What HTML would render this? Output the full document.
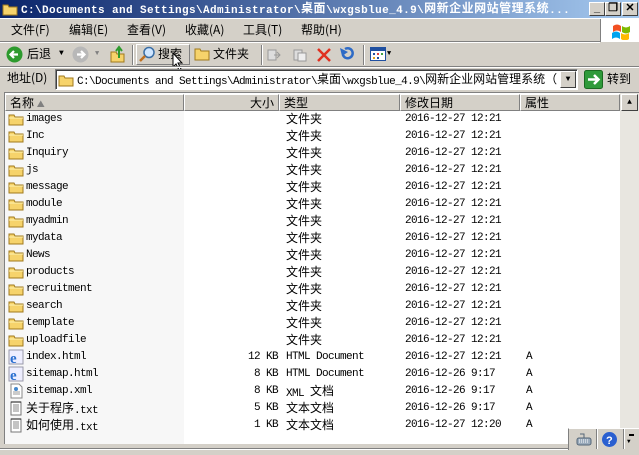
<!DOCTYPE html>
<html><head><meta charset="utf-8"><style>
*{margin:0;padding:0;box-sizing:border-box}
body{width:639px;height:455px;overflow:hidden;background:#d4d0c8;font-family:"Liberation Mono","Noto Sans CJK SC",monospace;font-size:11px;color:#000;position:relative}
.a{position:absolute}
.t{position:absolute;white-space:nowrap}
.cj{font-family:"Noto Sans CJK SC","WenQuanYi Zen Hei",sans-serif;font-size:12px;letter-spacing:0}
.c{font-family:"Noto Sans CJK SC","WenQuanYi Zen Hei",sans-serif;font-size:12px;letter-spacing:0;position:relative;top:-1px}
.row .c{top:-1px}
.btn{position:absolute;width:16px;height:14px;background:#d4d0c8;border:1px solid;border-color:#fff #404040 #404040 #fff;top:2px;font:bold 11px "Liberation Sans",sans-serif;text-align:center;line-height:11px}
.row{position:absolute;left:5px;height:17px;width:615px;line-height:17px;white-space:nowrap;letter-spacing:-0.6px}
.row>span{position:absolute;top:1px;height:16px;line-height:17px}
.hd{position:absolute;top:94px;height:17px;background:#d4d0c8;border:1px solid;border-color:#fff #808080 #808080 #fff;line-height:15px;padding-left:4px}
.m{position:absolute;top:20px;line-height:20px}
</style></head><body>
<div class="a" style="left:0;top:0;width:639px;height:18px;background:linear-gradient(90deg,#0a246a,#a6caf0)"></div>
<svg class="a" style="left:2px;top:2px" width="16" height="14"><path d="M1 3h5l1 2h8v8H1z" fill="#f6d36b" stroke="#a07a1c"/></svg>
<div class="t" style="left:21px;top:0;width:565px;overflow:hidden;line-height:18px;height:18px;color:#fff;font-weight:bold;font-size:11px;letter-spacing:0.4px">C:\Documents and Settings\Administrator\<span class="c" style="font-weight:bold;letter-spacing:0.5px">桌面</span>\wxgsblue_4.9\<span class="c" style="font-weight:bold;letter-spacing:0.5px">网新企业网站管理系统</span>...</div>
<div class="btn" style="left:589px">_</div><div class="btn" style="left:605px">❐</div><div class="btn" style="left:622px">✕</div>
<div class="a" style="left:0;top:18px;width:639px;height:1px;background:#fff"></div>
<div class="m cj" style="left:11px">文件(F)</div>
<div class="m cj" style="left:69px">编辑(E)</div>
<div class="m cj" style="left:127px">查看(V)</div>
<div class="m cj" style="left:185px">收藏(A)</div>
<div class="m cj" style="left:243px">工具(T)</div>
<div class="m cj" style="left:301px">帮助(H)</div>
<div class="a" style="left:600px;top:19px;width:39px;height:23px;background:#fff;border-left:1px solid #808080"></div>
<svg class="a" style="left:611px;top:22px" width="20" height="18"><path d="M2 4q4-3 8 0v6q-4-3-8 0z" fill="#f25022"/><path d="M11 4q4 3 8 0v6q-4 3-8 0z" fill="#7fba00"/><path d="M1 11q4-3 8 0v6q-4-3-8 0z" fill="#00a4ef"/><path d="M10 11q4 3 8 0v6q-4 3-8 0z" fill="#ffb900"/></svg>
<div class="a" style="left:0;top:41px;width:600px;height:1px;background:#808080"></div>
<div class="a" style="left:0;top:42px;width:600px;height:1px;background:#fff"></div>
<svg class="a" style="left:6px;top:46px" width="17" height="17"><circle cx="8.5" cy="8.5" r="8" fill="#2d9a2d"/><path d="M12 8.5H5M8 5l-3.5 3.5L8 12" stroke="#fff" stroke-width="2.2" fill="none"/></svg>
<div class="t cj" style="left:27px;top:45px;line-height:18px">后退</div>
<div class="t" style="left:59px;top:45px;font-size:8px;line-height:18px">▼</div>
<svg class="a" style="left:72px;top:46px" width="17" height="17"><circle cx="8.5" cy="8.5" r="8" fill="#b8b8b8"/><path d="M5 8.5h7M9 5l3.5 3.5L9 12" stroke="#fff" stroke-width="2.2" fill="none"/></svg>
<div class="t" style="left:95px;top:45px;font-size:7px;line-height:18px;color:#808080">▼</div>
<svg class="a" style="left:110px;top:45px" width="16" height="18"><path d="M1 7h5l1 2h7v8H1z" fill="#f6d36b" stroke="#a07a1c"/><path d="M9 13V4M6 6l3-4 3 4" stroke="#2d9a2d" stroke-width="2" fill="none"/></svg>
<div class="a" style="left:132px;top:45px;width:1px;height:20px;background:#808080;box-shadow:1px 0 #fff"></div>
<div class="a" style="left:136px;top:44px;width:54px;height:21px;border:1px solid;border-color:#fff #808080 #808080 #fff"></div>
<svg class="a" style="left:139px;top:46px" width="17" height="17"><circle cx="10" cy="6.5" r="5" fill="#cfe6ff" stroke="#3a6ea5" stroke-width="1.5"/><path d="M6 10l-5 5" stroke="#c07020" stroke-width="2.5"/></svg>
<div class="t cj" style="left:158px;top:45px;line-height:18px">搜索</div>
<svg class="a" style="left:172px;top:52px" width="12" height="19"><path d="M1 1v14l3-3 3 6 2-1-3-6h4z" fill="#fff" stroke="#000"/></svg>
<svg class="a" style="left:194px;top:46px" width="17" height="16"><path d="M1 3h5l1 2h8v9H1z" fill="#f6d36b" stroke="#a07a1c"/></svg>
<div class="t cj" style="left:213px;top:45px;line-height:18px">文件夹</div>
<div class="a" style="left:261px;top:45px;width:1px;height:20px;background:#808080;box-shadow:1px 0 #fff"></div>
<svg class="a" style="left:266px;top:47px" width="16" height="16"><path d="M2 3h8v10H2z" fill="#ddd" stroke="#999"/><path d="M8 8h6M11 5l3 3-3 3" stroke="#999" fill="none"/></svg>
<svg class="a" style="left:292px;top:47px" width="16" height="16"><path d="M2 3h8v10H2z" fill="#ddd" stroke="#999"/><path d="M6 6h8v8H6z" fill="#eee" stroke="#999"/></svg>
<svg class="a" style="left:316px;top:47px" width="16" height="16"><path d="M2 2l12 12M14 2L2 14" stroke="#e03020" stroke-width="2.5"/></svg>
<svg class="a" style="left:339px;top:46px" width="17" height="16"><path d="M4 9a5 5 0 1 0 2-6" stroke="#2e6bc6" stroke-width="2.5" fill="none"/><path d="M1 2l2 8 6-4z" fill="#2e6bc6"/></svg>
<div class="a" style="left:363px;top:45px;width:1px;height:20px;background:#808080;box-shadow:1px 0 #fff"></div>
<svg class="a" style="left:370px;top:47px" width="16" height="14"><rect x="0.5" y="0.5" width="15" height="13" fill="#fff" stroke="#2050a0"/><rect x="1" y="1" width="14" height="3" fill="#2050a0"/><rect x="3" y="6" width="2" height="2" fill="#2050a0"/><rect x="7" y="6" width="2" height="2" fill="#e04040"/><rect x="11" y="6" width="2" height="2" fill="#40a040"/><rect x="3" y="10" width="2" height="2" fill="#e0a020"/><rect x="7" y="10" width="2" height="2" fill="#2050a0"/></svg>
<div class="t" style="left:387px;top:45px;font-size:7px;line-height:18px">▼</div>
<div class="a" style="left:0;top:66px;width:639px;height:1px;background:#808080"></div>
<div class="a" style="left:0;top:67px;width:639px;height:1px;background:#fff"></div>
<div class="t cj" style="left:7px;top:69px;line-height:18px">地址(D)</div>
<div class="a" style="left:55px;top:69px;width:523px;height:21px;background:#fff;border:1px solid;border-color:#808080 #fff #fff #808080;box-shadow:inset 1px 1px #404040"></div>
<svg class="a" style="left:58px;top:73px" width="16" height="14"><path d="M1 3h5l1 2h8v8H1z" fill="#f6d36b" stroke="#a07a1c"/></svg>
<div class="t" style="left:77px;top:71px;width:482px;overflow:hidden;height:18px;line-height:18px;font-size:11px;letter-spacing:-0.6px">C:\Documents and Settings\Administrator\<span class="c">桌面</span>\wxgsblue_4.9\<span class="c">网新企业网站管理系统（</span></div>
<div class="a" style="left:560px;top:71px;width:16px;height:17px;background:#d4d0c8;border:1px solid;border-color:#fff #404040 #404040 #fff;font-size:8px;text-align:center;line-height:15px">▼</div>
<svg class="a" style="left:584px;top:70px" width="19" height="19"><rect x="0.5" y="0.5" width="18" height="18" rx="2" fill="#2f9a3a" stroke="#1a6a20"/><path d="M4 9.5h10M10 5l4.5 4.5L10 14" stroke="#fff" stroke-width="2.5" fill="none"/></svg>
<div class="t cj" style="left:607px;top:69px;line-height:20px">转到</div>
<div class="a" style="left:4px;top:92px;width:635px;height:352px;background:#fff;border-top:1px solid #808080;border-left:1px solid #808080"></div>
<div class="a" style="left:5px;top:111px;width:179px;height:333px;background:#f7f7f7"></div>
<div class="hd cj" style="left:5px;width:179px">名称 <span style="font-size:8px;color:#808080">▲</span></div>
<div class="hd cj" style="left:184px;width:95px;text-align:right;padding-right:4px">大小</div>
<div class="hd cj" style="left:279px;width:121px">类型</div>
<div class="hd cj" style="left:400px;width:120px">修改日期</div>
<div class="hd cj" style="left:520px;width:100px">属性</div>
<div class="a" style="left:620px;top:93px;width:19px;height:335px;background:#e8e6e0"></div>
<div class="a" style="left:621px;top:94px;width:17px;height:17px;background:#d4d0c8;border:1px solid;border-color:#fff #404040 #404040 #fff;font-size:8px;text-align:center;line-height:15px">▲</div>
<div id="rows"></div>
<script>
var F='<svg width="17" height="14" style="position:absolute;left:3px;top:2px"><path d="M1 3h5l1 2h8v8H1z" fill="#f6d36b" stroke="#a07a1c"/><path d="M1 6h14" stroke="#fff3b0"/></svg>';
var E='<svg width="17" height="16" style="position:absolute;left:3px;top:1px"><rect x="1" y="1" width="14" height="14" fill="#eef" stroke="#99a"/><text x="2" y="14" font-size="15" font-family="Liberation Serif" font-weight="bold" fill="#2a6fd0">e</text></svg>';
var X='<svg width="17" height="16" style="position:absolute;left:3px;top:1px"><path d="M3 1h8l3 3v11H3z" fill="#fff" stroke="#888"/><path d="M5 9h7M5 11h7" stroke="#999"/><circle cx="8" cy="6" r="2" fill="#48c"/></svg>';
var T='<svg width="17" height="16" style="position:absolute;left:3px;top:1px"><path d="M3 2h10v13H3z" fill="#fff" stroke="#777"/><path d="M5 5h6M5 7h6M5 9h6M5 11h6" stroke="#888"/><path d="M4 1v2M6 1v2M8 1v2M10 1v2M12 1v2" stroke="#555"/></svg>';
var d=[
[F,'images','','文件夹','2016-12-27 12:21',''],[F,'Inc','','文件夹','2016-12-27 12:21',''],[F,'Inquiry','','文件夹','2016-12-27 12:21',''],[F,'js','','文件夹','2016-12-27 12:21',''],[F,'message','','文件夹','2016-12-27 12:21',''],[F,'module','','文件夹','2016-12-27 12:21',''],[F,'myadmin','','文件夹','2016-12-27 12:21',''],[F,'mydata','','文件夹','2016-12-27 12:21',''],[F,'News','','文件夹','2016-12-27 12:21',''],[F,'products','','文件夹','2016-12-27 12:21',''],[F,'recruitment','','文件夹','2016-12-27 12:21',''],[F,'search','','文件夹','2016-12-27 12:21',''],[F,'template','','文件夹','2016-12-27 12:21',''],[F,'uploadfile','','文件夹','2016-12-27 12:21',''],
[E,'index.html','12 KB','HTML Document','2016-12-27 12:21','A'],[E,'sitemap.html','8 KB','HTML Document','2016-12-26 9:17','A'],[X,'sitemap.xml','8 KB','XML 文档','2016-12-26 9:17','A'],[T,'关于程序.txt','5 KB','文本文档','2016-12-26 9:17','A'],[T,'如何使用.txt','1 KB','文本文档','2016-12-27 12:20','A']];
function cj(s){return s.replace(/([^\x00-\x7f]+)/g,'<span class="c">$1</span>');}
var h='';
d.forEach(function(r,i){h+='<div class="row" style="top:'+(110+17*i)+'px">'+r[0]+'<span style="left:21px">'+cj(r[1])+'</span><span style="right:342px">'+r[2]+'</span><span style="left:281px">'+cj(r[3])+'</span><span style="left:400px">'+r[4]+'</span><span style="left:521px">'+r[5]+'</span></div>';});
document.getElementById('rows').innerHTML=h;
</script>
<div class="a" style="left:568px;top:428px;width:71px;height:22px;background:#d4d0c8;border-top:1px solid #fff;border-left:1px solid #808080"></div>
<svg class="a" style="left:575px;top:431px" width="18" height="16"><rect x="2" y="7" width="14" height="7" rx="2" fill="#9ab" stroke="#567"/><path d="M4 9h10M4 11h10" stroke="#fff" stroke-dasharray="1 1"/><path d="M9 7V3h-4" stroke="#567" fill="none"/></svg>
<div class="a" style="left:596px;top:429px;width:1px;height:20px;background:#808080;box-shadow:1px 0 #fff"></div>
<svg class="a" style="left:601px;top:431px" width="17" height="17"><circle cx="8.5" cy="8.5" r="7.5" fill="#2a5fd0"/><text x="5" y="13" font-size="11" font-weight="bold" font-family="Liberation Sans" fill="#fff">?</text></svg>
<div class="a" style="left:623px;top:429px;width:1px;height:20px;background:#808080;box-shadow:1px 0 #fff"></div>
<div class="a" style="left:629px;top:434px;width:5px;height:2px;background:#000"></div>
<div class="t" style="left:627px;top:438px;font-size:6px">▼</div>
<div class="a" style="left:0;top:448px;width:568px;height:1px;background:#808080"></div>
<div class="a" style="left:0;top:449px;width:568px;height:1px;background:#fff"></div>
</body></html>
